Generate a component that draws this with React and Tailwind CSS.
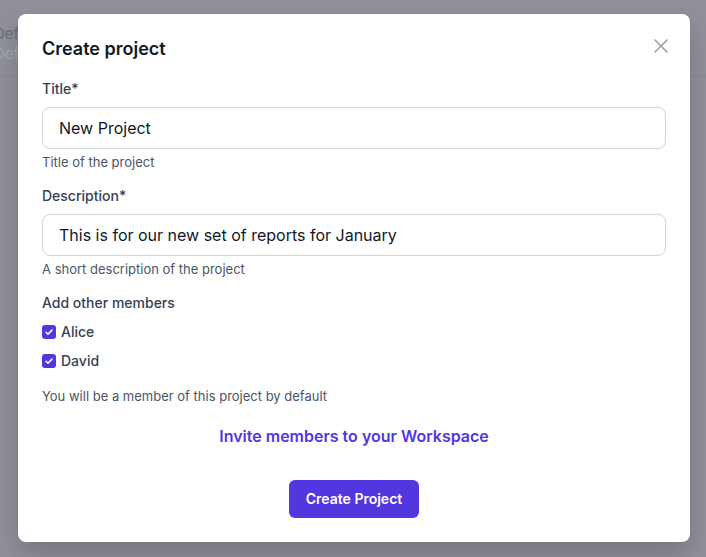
import { useState } from "react";

const font = { fontFamily: "Inter, 'Noto Sans', sans-serif" };

// Checkbox drawn by hand so it matches the indigo square in the shot
function Check({ label, checked, onChange }) {
  return (
    <label className="flex items-center gap-[5px] cursor-pointer h-[20px]">
      <span
        onClick={onChange}
        className={
          "flex h-[14px] w-[14px] items-center justify-center rounded-[3px] " +
          (checked ? "bg-[#5236e0]" : "border border-gray-300 bg-white")
        }
      >
        {checked && (
          <svg viewBox="0 0 16 16" className="h-[12px] w-[12px]" fill="none">
            <path d="M4 8.3l2.6 2.6L12 5.5" stroke="white" strokeWidth="2" strokeLinecap="round" strokeLinejoin="round" />
          </svg>
        )}
      </span>
      <span className="text-sm font-medium text-gray-700">{label}</span>
    </label>
  );
}

export default function App() {
  const [title, setTitle] = useState("New Project");
  const [desc, setDesc] = useState("This is for our new set of reports for January");
  const [members, setMembers] = useState({ Alice: true, David: true });

  const toggle = (name) => setMembers((m) => ({ ...m, [name]: !m[name] }));

  return (
    <div style={font} className="relative h-[557px] w-[706px] overflow-hidden bg-[#8f9099]">
      {/* page behind the overlay */}
      <div className="h-[77px] border-b border-[#868892]">
        <div className="ml-[-6px] pt-[24px] text-[15px] leading-[20px] text-[#6b6d7a]">Defa</div>
        <div className="ml-[-6px] text-[15px] leading-[20px] text-[#a3a5ae]">Default</div>
      </div>

      {/* modal */}
      <div className="absolute left-[18px] top-[14px] w-[672px] rounded-lg bg-white px-6 pb-6 pt-[21px] shadow-[0_12px_24px_rgba(0,0,0,0.18)]">
        <div className="flex items-start justify-between">
          <h2 className="text-lg font-semibold leading-7 text-gray-900">Create project</h2>
          <button className="mt-[4px] mr-[-2px] text-gray-400">
            <svg viewBox="0 0 14 14" className="h-[14px] w-[14px]" fill="none">
              <path d="M1 1l12 12M13 1L1 13" stroke="currentColor" strokeWidth="1.6" strokeLinecap="round" />
            </svg>
          </button>
        </div>

        <div className="mt-[16px]">
          <div className="text-sm font-medium leading-5 text-gray-700">Title*</div>
          <input
            className="mt-[8px] h-[42px] w-full rounded-lg border border-gray-300 px-[16px] text-base text-gray-900 outline-none"
            value={title}
            onChange={(e) => setTitle(e.target.value)}
          />
          <p className="mt-[4px] text-[13px] leading-[18px] text-gray-600">Title of the project</p>
        </div>

        <div className="mt-[15px]">
          <div className="text-sm font-medium leading-5 text-gray-700">Description*</div>
          <input
            className="mt-[8px] h-[42px] w-full rounded-lg border border-gray-300 px-[16px] text-base text-gray-900 outline-none"
            value={desc}
            onChange={(e) => setDesc(e.target.value)}
          />
          <p className="mt-[4px] text-[13px] leading-[18px] text-gray-600">A short description of the project</p>
        </div>

        <div className="mt-[15px]">
          <div className="text-sm font-medium leading-5 text-gray-700">Add other members</div>
          <div className="mt-[9px] flex flex-col gap-[9px]">
            {Object.keys(members).map((name) => (
              <Check key={name} label={name} checked={members[name]} onChange={() => toggle(name)} />
            ))}
          </div>
          <p className="mt-[16px] text-[13px] leading-[18px] text-gray-600">
            You will be a member of this project by default
          </p>
        </div>

        <div className="mt-[19px] text-center">
          <a href="#" className="text-base font-semibold text-[#5236e0]">
            Invite members to your Workspace
          </a>
        </div>

        <div className="mt-[32px] flex justify-center">
          <button className="h-[38px] rounded-md bg-[#5236e0] px-[17px] text-sm font-semibold text-white">
            Create Project
          </button>
        </div>
      </div>
    </div>
  );
}
